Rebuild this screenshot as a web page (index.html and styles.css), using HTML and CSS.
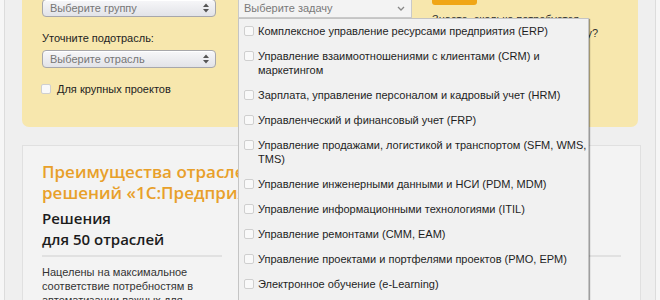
FILE: index.html
```html
<!DOCTYPE html>
<html lang="ru">
<head>
<meta charset="utf-8">
<title>Отраслевые решения</title>
<link rel="stylesheet" href="styles.css">
</head>
<body>
<div class="page">
  <div class="filter">
    <div class="fcol">
      <div class="msel"><span>Выберите группу</span>
        <svg class="updown" width="6" height="10" viewBox="0 0 6 10"><path d="M0 4 L3 0.5 L6 4Z M0 6 L3 9.5 L6 6Z" fill="#555"/></svg>
      </div>
      <div class="flabel">Уточните подотрасль:</div>
      <div class="msel"><span>Выберите отрасль</span>
        <svg class="updown" width="6" height="10" viewBox="0 0 6 10"><path d="M0 4 L3 0.5 L6 4Z M0 6 L3 9.5 L6 6Z" fill="#555"/></svg>
      </div>
      <div class="fcheck"><span class="cbox"></span><span>Для крупных проектов</span></div>
    </div>
    <div class="fcol task">
      <div class="fsel"><span>Выберите задачу</span>
        <svg class="chev" width="8" height="5" viewBox="0 0 8 5"><path d="M1 1 L4 4 L7 1" fill="none" stroke="#888" stroke-width="1.3"/></svg>
      </div>
      <ul class="dropdown">
        <li><span class="cbox"></span><span>Комплексное управление ресурсами предприятия (ERP)</span></li>
        <li><span class="cbox"></span><span>Управление взаимоотношениями с клиентами (CRM) и маркетингом</span></li>
        <li><span class="cbox"></span><span>Зарплата, управление персоналом и кадровый учет (HRM)</span></li>
        <li><span class="cbox"></span><span>Управленческий и финансовый учет (FRP)</span></li>
        <li><span class="cbox"></span><span>Управление продажами, логистикой и транспортом (SFM, WMS, TMS)</span></li>
        <li><span class="cbox"></span><span>Управление инженерными данными и НСИ (PDM, MDM)</span></li>
        <li><span class="cbox"></span><span>Управление информационными технологиями (ITIL)</span></li>
        <li><span class="cbox"></span><span>Управление ремонтами (CMM, EAM)</span></li>
        <li><span class="cbox"></span><span>Управление проектами и портфелями проектов (PMO, EPM)</span></li>
        <li><span class="cbox"></span><span>Электронное обучение (e-Learning)</span></li>
        <li><span class="cbox"></span><span>Управление документооборотом (ECM)</span></li>
      </ul>
    </div>
    <div class="fcol calc">
      <div class="obtn">Узнать</div>
      <a class="calc-link" href="#">Знаете, сколько потребуется времени и затрат на доработку?</a>
    </div>
  </div>

  <div class="card">
    <h2 class="card-title">Преимущества отраслевых решений «1С:Предприятие»</h2>
    <div class="feats">
      <div class="feat">
        <h3>Решения<br>для 50 отраслей</h3>
        <div class="sep"></div>
        <p>Нацелены на максимальное соответствие потребностям в автоматизации важных для бизнеса задач</p>
      </div>
      <div class="feat">
        <h3>Более 1500<br>партнеров</h3>
        <div class="sep"></div>
        <p>Обеспечивают внедрение и сопровождение во всех регионах</p>
      </div>
      <div class="feat">
        <h3>Проверенные<br>технологии</h3>
        <div class="sep"></div>
        <p>Разработаны с участием специалистов из индустрии</p>
      </div>
    </div>
  </div>
</div>
</body>
</html>
```

FILE: styles.css
```css
html, body {
  margin: 0;
  padding: 0;
}
body {
  background: #f6f6f6;
  font-family: "Liberation Sans", Arial, sans-serif;
  font-size: 11px;
  color: #222;
  overflow: hidden;
}
.page {
  margin: -22px 4px 0;
  padding: 0 17px 40px;
  border-left: 1px solid #dcdcdc;
  border-right: 1px solid #dcdcdc;
  background: #efefef;
}

/* filter panel */
.filter {
  background: #f7e7ad;
  border-radius: 0 0 7px 7px;
  padding: 21px 20px 31px;
  display: grid;
  grid-template-columns: 196px 194px 1fr;
}
.fcol {
  width: 174px;
}
.fcol.calc {
  width: auto;
}
.msel {
  box-sizing: border-box;
  height: 18px;
  border: 1px solid #a7a7ab;
  border-radius: 4px;
  background: linear-gradient(#f7f7f9, #e2e3e8);
  box-shadow: inset 0 1px 0 #fff;
  display: flex;
  align-items: center;
  justify-content: space-between;
  padding: 0 6px 0 7px;
  color: #767676;
  line-height: 14px;
}
.updown {
  display: block;
}
.flabel {
  margin-top: 14px;
  line-height: 14px;
  color: #222;
}
.flabel + .msel {
  margin-top: 5px;
}
.fcheck {
  margin-top: 14px;
  display: flex;
  align-items: center;
  line-height: 14px;
  gap: 6px;
  margin-left: -1px;
}
.cbox {
  box-sizing: border-box;
  flex: none;
  width: 10px;
  height: 10px;
  border: 1px solid #cfcfcf;
  border-radius: 2px;
  background: #f9f9f9;
}

/* task select */
.task {
  position: relative;
  margin-top: -1px;
}
.fsel {
  box-sizing: border-box;
  height: 20px;
  border: 1px solid #c9c9c9;
  background: #f3f3f3;
  display: flex;
  align-items: center;
  justify-content: space-between;
  padding: 0 6px 0 5px;
  color: #7a7a7a;
  line-height: 14px;
}
.chev {
  display: block;
}
.dropdown {
  position: absolute;
  top: 20px;
  left: 0;
  width: 351px;
  box-sizing: border-box;
  margin: 0;
  padding: 0;
  list-style: none;
  background: #f1f1f1;
  border: 1px solid #c4c4c4;
  box-shadow: 1px 1px 1px rgba(0, 0, 0, 0.35);
  z-index: 5;
}
.dropdown li {
  display: flex;
  gap: 4px;
  padding: 5px 0 6px 5px;
  line-height: 14px;
  color: #1e1e1e;
}
.dropdown .cbox {
  margin-top: 2px;
}

/* calc */
.calc {
  margin-top: -24px;
}
.obtn {
  width: fit-content;
  height: 30px;
  padding: 0 4px;
  line-height: 24px;
  border-radius: 0 0 3px 3px;
  background: #f0a617;
  color: #fff;
  font-weight: bold;
}
.calc-link {
  display: block;
  margin-top: 7px;
  line-height: 14px;
  color: #333;
  text-decoration: none;
}

/* card */
.card {
  margin: 18px -3px 0 0;
  background: #f3f3f3;
  border: 1px solid #e0e0e0;
  padding: 15px 19px 30px;
}
.card-title {
  margin: 0 0 5px;
  max-width: 300px;
  font-family: "Open Sans", "Noto Sans", sans-serif;
  font-weight: 600;
  font-size: 17px;
  line-height: 21px;
  color: #e8a02a;
}
.feats {
  display: grid;
  grid-template-columns: 1fr 1fr 1fr;
  column-gap: 20px;
}
.feat h3 {
  margin: 0;
  font-family: "Open Sans", "Noto Sans", sans-serif;
  font-weight: 600;
  font-size: 15px;
  line-height: 21px;
  color: #1c1c1c;
}
.sep {
  margin-top: 5px;
  height: 2px;
  background: #e1e1e1;
}
.feat p {
  margin: 8px 0 0;
  line-height: 14px;
  color: #333;
}
```
